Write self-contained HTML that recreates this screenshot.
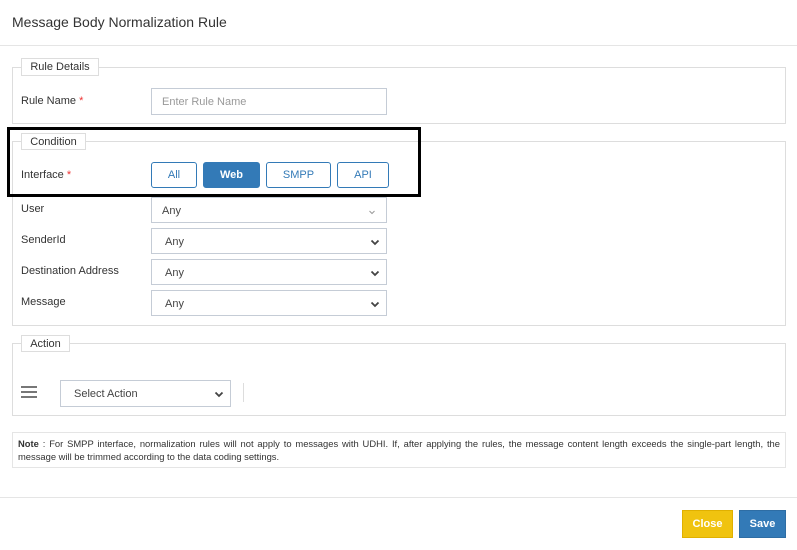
<!DOCTYPE html>
<html><head><style>
*{box-sizing:border-box;margin:0;padding:0}
body{width:797px;height:550px;background:#fff;font-family:"Liberation Sans",sans-serif;color:#333;position:relative;overflow:hidden}
.a{position:absolute}
.fs{position:absolute;border:1px solid #ddd}
.lg{position:absolute;border:1px solid #ddd;background:#fff;font-size:11px;color:#333;text-align:center;line-height:16px}
.lb{position:absolute;font-size:11px;color:#333}
.req{color:#e33}
.sel{position:absolute;left:151px;width:236px;height:26px;border:1px solid #c5ccd6;background:#fff;font-size:11px;color:#444;padding-left:13px;line-height:26px}
.chev{position:absolute;right:6px;top:10px}
.btn{position:absolute;top:162px;height:26px;border:1px solid #337ab7;border-radius:3px;font-size:11px;color:#337ab7;text-align:center;line-height:25px;background:#fff}
</style></head><body>
<div class="a" style="left:12px;top:14px;font-size:14px;color:#333">Message Body Normalization Rule</div>
<div class="a" style="left:0;top:45px;width:797px;height:1px;background:#e5e5e5"></div>

<div class="fs" style="left:12px;top:67px;width:774px;height:57px"></div>
<div class="lg" style="left:21px;top:58px;width:78px;height:18px">Rule Details</div>
<div class="lb" style="left:21px;top:95px">Rule Name <span class="req">*</span></div>
<div class="a" style="left:151px;top:88px;width:236px;height:27px;border:1px solid #c5ccd6;font-size:11px;color:#999;padding-left:10px;line-height:26px">Enter Rule Name</div>

<div class="fs" style="left:12px;top:141px;width:774px;height:185px"></div>
<div class="lg" style="left:21px;top:133px;width:65px;height:17px">Condition</div>
<div class="lb" style="left:21px;top:169px">Interface <span class="req">*</span></div>
<div class="btn" style="left:151px;width:46px">All</div>
<div class="btn" style="left:203px;width:57px;background:#337ab7;color:#fff;font-weight:bold">Web</div>
<div class="btn" style="left:266px;width:65px">SMPP</div>
<div class="btn" style="left:337px;width:52px">API</div>

<div class="lb" style="left:21px;top:203px">User</div>
<div class="sel" style="top:197px;height:26px;padding-left:10px;line-height:27px">Any<svg class="chev" width="8" height="6" viewBox="0 0 8 6" style="right:10px;top:11px"><path d="M1.5 2L4 4.5 6.5 2" fill="none" stroke="#999" stroke-width="1"/></svg></div>
<div class="lb" style="left:21px;top:234px">SenderId</div>
<div class="sel" style="top:228px">Any<svg class="chev" width="10" height="7" viewBox="0 0 10 7"><path d="M1.5 1.5L5 5 8.5 1.5" fill="none" stroke="#444" stroke-width="1.8"/></svg></div>
<div class="lb" style="left:21px;top:265px">Destination Address</div>
<div class="sel" style="top:259px">Any<svg class="chev" width="10" height="7" viewBox="0 0 10 7"><path d="M1.5 1.5L5 5 8.5 1.5" fill="none" stroke="#444" stroke-width="1.8"/></svg></div>
<div class="lb" style="left:21px;top:296px">Message</div>
<div class="sel" style="top:290px">Any<svg class="chev" width="10" height="7" viewBox="0 0 10 7"><path d="M1.5 1.5L5 5 8.5 1.5" fill="none" stroke="#444" stroke-width="1.8"/></svg></div>

<div class="a" style="left:7px;top:127px;width:414px;height:70px;border:3px solid #000"></div>

<div class="fs" style="left:12px;top:343px;width:774px;height:73px"></div>
<div class="lg" style="left:21px;top:335px;width:49px;height:17px">Action</div>
<div class="a" style="left:21px;top:386px;width:16px;height:2px;background:#777"></div>
<div class="a" style="left:21px;top:391px;width:16px;height:2px;background:#777"></div>
<div class="a" style="left:21px;top:396px;width:16px;height:2px;background:#777"></div>
<div class="sel" style="left:60px;top:380px;width:171px;height:27px;line-height:27px">Select Action<svg class="chev" width="10" height="7" viewBox="0 0 10 7" style="top:10px"><path d="M1.5 1.5L5 5 8.5 1.5" fill="none" stroke="#444" stroke-width="1.8"/></svg></div>
<div class="a" style="left:243px;top:383px;width:1px;height:19px;background:#ddd"></div>

<div class="a" style="left:12px;top:432px;width:774px;height:36px;border:1px solid #e5e5e5;font-size:9.4px;line-height:13px;padding:4px 5px;color:#333;text-align:justify"><b>Note</b> : For SMPP interface, normalization rules will not apply to messages with UDHI. If, after applying the rules, the message content length exceeds the single-part length, the message will be trimmed according to the data coding settings.</div>

<div class="a" style="left:0;top:497px;width:797px;height:1px;background:#e5e5e5"></div>
<div class="a" style="left:682px;top:510px;width:51px;height:28px;background:#f0c30f;border:1px solid #e0b000;color:#fff;font-size:11px;font-weight:bold;text-align:center;line-height:27px">Close</div>
<div class="a" style="left:739px;top:510px;width:47px;height:28px;background:#337ab7;border:1px solid #2e6da4;color:#fff;font-size:11px;font-weight:bold;text-align:center;line-height:27px">Save</div>
</body></html>
